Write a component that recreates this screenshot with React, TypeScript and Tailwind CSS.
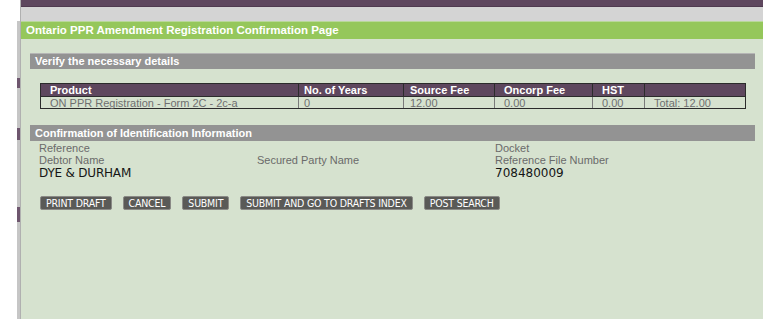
import React from "react";

const cols = [
  { label: "Product", w: "w-[257px]", pl: "pl-[9px]" },
  { label: "No. of Years", w: "w-[105px]", pl: "pl-[5px]" },
  { label: "Source Fee", w: "w-[91px]", pl: "pl-[6px]" },
  { label: "Oncorp Fee", w: "w-[98px]", pl: "pl-[9px]" },
  { label: "HST", w: "w-[52px]", pl: "pl-[9px]" },
  { label: "", w: "flex-1", pl: "pl-[9px]" },
];
const row = ["ON PPR Registration - Form 2C - 2c-a", "0", "12.00", "0.00", "0.00", "Total: 12.00"];

function Btn({ children }: { children: React.ReactNode }) {
  return (
    <div className="h-[14px] px-[5px] flex items-center rounded-[2px] bg-[#5a5a57] border border-[#8a8a86] text-white text-[10.5px] leading-none font-['DejaVu_Sans_Condensed',sans-serif] tracking-[-0.2px]">
      {children}
    </div>
  );
}

export default function App() {
  return (
    <div className="w-[763px] h-[319px] flex bg-white overflow-hidden font-['Liberation_Sans',sans-serif]">
      <div className="w-[17px] bg-white" />
      <div className="w-[3px] flex flex-col">
        <div className="h-[21px] bg-white" />
        <div className="h-[57px] bg-[#c6c6c6]" />
        <div className="h-[10px] bg-[#6e566e]" />
        <div className="h-[40px] bg-[#c6c6c6]" />
        <div className="h-[12px] bg-[#6e566e]" />
        <div className="h-[67px] bg-[#c6c6c6]" />
        <div className="h-[15px] bg-[#6e566e]" />
        <div className="flex-1 bg-[#c6c6c6]" />
      </div>
      <div className="w-[1px] bg-[#b0b0b0]" />
      <div className="flex-1 flex flex-col">
        <div className="h-[7px] bg-[#5e475e] border-b border-[#4f3a4f]" />
        <div className="h-[14px] bg-[#d4d4d4]" />
        <div className="h-[18px] bg-[#95c75b] border-t border-[#b9d89a] flex items-center pl-[5px] text-white font-bold text-[11.5px]">
          Ontario PPR Amendment Registration Confirmation Page
        </div>
        <div className="flex-1 bg-[#d6e2cf] pl-[9px] pr-[8px] pt-[14px]">
          <div className="h-[16px] bg-[#939393] border-t border-[#b5b5b5] flex items-center pl-[5px] text-white font-bold text-[11px]">
            Verify the necessary details
          </div>
          <div className="mt-[14px] ml-[10px] mr-[9px] border border-[#2b2b2b] text-[11px] leading-[12px]">
            <div className="flex bg-[#5e475e] text-white font-bold h-[12px]">
              {cols.map((c, i) => (
                <div key={i} className={`${c.w} ${c.pl} ${i > 0 ? "border-l border-[#2b2b2b]" : ""}`}>
                  {c.label}
                </div>
              ))}
            </div>
            <div className="flex text-[#6f6f6f] h-[12px] border-t border-[#2b2b2b]">
              {cols.map((c, i) => (
                <div key={i} className={`${c.w} ${c.pl} ${i > 0 ? "border-l border-[#7a7a7a]" : ""}`}>
                  {row[i]}
                </div>
              ))}
            </div>
          </div>
          <div className="mt-[16px] h-[16px] bg-[#939393] flex items-center pl-[5px] text-white font-bold text-[11px]">
            Confirmation of Identification Information
          </div>
          <div className="pl-[9px] grid grid-cols-[218px_238px_1fr] text-[11px] leading-[12px] text-[#6a6a6a] pt-[1px]">
            <div>Reference</div>
            <div />
            <div>Docket</div>
            <div>Debtor Name</div>
            <div>Secured Party Name</div>
            <div>Reference File Number</div>
            <div className="text-[12px] leading-[15px] text-[#151515] font-['DejaVu_Sans',sans-serif] tracking-[-0.2px]">DYE &amp; DURHAM</div>
            <div />
            <div className="text-[12px] leading-[15px] text-[#151515] font-['DejaVu_Sans',sans-serif]">708480009</div>
          </div>
          <div className="mt-[15px] ml-[10px] flex gap-[11px]">
            <Btn>PRINT DRAFT</Btn>
            <Btn>CANCEL</Btn>
            <Btn>SUBMIT</Btn>
            <Btn>SUBMIT AND GO TO DRAFTS INDEX</Btn>
            <Btn>POST SEARCH</Btn>
          </div>
        </div>
      </div>
    </div>
  );
}
